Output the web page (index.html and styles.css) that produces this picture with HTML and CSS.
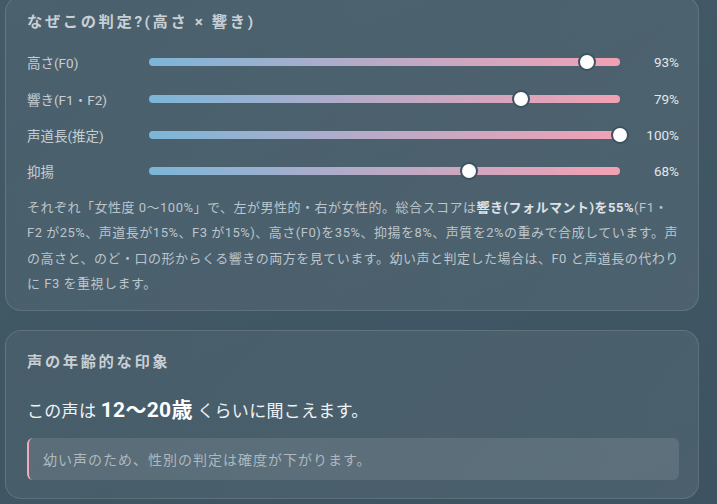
FILE: index.html
```html
<!DOCTYPE html>
<html lang="ja">
<head>
<meta charset="utf-8">
<title>判定の内訳</title>
<link rel="stylesheet" href="styles.css">
</head>
<body>
<main class="page">
  <section class="card why">
    <h2 class="card-title">なぜこの判定?(高さ × 響き)</h2>
    <div class="meters">
      <div class="meter">
        <span class="meter-label">高さ(F0)</span>
        <div class="track"><span class="thumb" style="left:93%"></span></div>
        <span class="meter-value">93%</span>
      </div>
      <div class="meter">
        <span class="meter-label">響き(F1・F2)</span>
        <div class="track"><span class="thumb" style="left:79%"></span></div>
        <span class="meter-value">79%</span>
      </div>
      <div class="meter">
        <span class="meter-label">声道長(推定)</span>
        <div class="track"><span class="thumb" style="left:100%"></span></div>
        <span class="meter-value">100%</span>
      </div>
      <div class="meter">
        <span class="meter-label">抑揚</span>
        <div class="track"><span class="thumb" style="left:68%"></span></div>
        <span class="meter-value">68%</span>
      </div>
    </div>
    <p class="explain">それぞれ「女性度 0〜100%」で、左が男性的・右が女性的。総合スコアは<strong>響き(フォルマント)を55%</strong>(F1・F2 が25%、声道長が15%、F3 が15%)、高さ(F0)を35%、抑揚を8%、声質を2%の重みで合成しています。声の高さと、のど・口の形からくる響きの両方を見ています。幼い声と判定した場合は、F0 と声道長の代わりに F3 を重視します。</p>
  </section>

  <section class="card age">
    <h2 class="card-title">声の年齢的な印象</h2>
    <p class="age-line">この声は <strong class="age-range">12〜20歳</strong> くらいに聞こえます。</p>
    <div class="note">幼い声のため、性別の判定は確度が下がります。</div>
  </section>
</main>
</body>
</html>
```

FILE: styles.css
```css
html, body {
  margin: 0;
  height: 100%;
  overflow: hidden;
}

body {
  background: linear-gradient(160deg, #435a67 0%, #3d5361 100%);
  font-family: "Roboto", "Noto Sans CJK JP", sans-serif;
  color: #c9d1d6;
}

.page {
  display: flex;
  flex-direction: column;
  gap: 19px;
  padding: 0 18px 0 5px;
}

.card {
  background: linear-gradient(135deg, rgba(255,255,255,0.045), rgba(255,255,255,0.075));
  border: 1px solid rgba(255,255,255,0.12);
  border-radius: 16px;
  padding: 15px 19px 13px 21px;
}

.why {
  margin-top: -4px;
}

.card-title {
  margin: 0;
  font-size: 15.3px;
  line-height: 20px;
  font-weight: 700;
  letter-spacing: 2.6px;
  color: #c8d0d6;
}

.meters {
  display: flex;
  flex-direction: column;
  margin-top: 12px;
}

.meter {
  display: grid;
  grid-template-columns: 122px 1fr 59px;
  align-items: center;
  height: 36.4px;
}

.meter-label {
  font-size: 13.5px;
  color: #c6ced4;
}

.track {
  position: relative;
  height: 8px;
  border-radius: 4px;
  background: linear-gradient(90deg, #7cb6d8 0%, #b5abc8 45%, #f2a1b4 100%);
}

.thumb {
  position: absolute;
  top: 50%;
  width: 14px;
  height: 14px;
  border-radius: 50%;
  background: #ffffff;
  border: 2px solid #3d5260;
  transform: translate(-50%, -50%);
}

.meter-value {
  text-align: right;
  font-size: 13.5px;
  color: #e2e8ec;
}

.explain {
  margin: 5px 0 0;
  font-size: 13px;
  line-height: 25.5px;
  letter-spacing: 0.5px;
  color: #bcc5cb;
}

.explain strong {
  font-weight: 700;
  color: #dde3e7;
}

.age {
  padding: 21px 19px 18px 21px;
}

.age-line {
  margin: 24px 0 0;
  font-size: 17px;
  line-height: 28px;
  letter-spacing: 0.3px;
  color: #eef2f4;
}

.age-range {
  font-size: 21px;
  font-weight: 700;
  color: #ffffff;
}

.note {
  margin-top: 13px;
  padding: 0 14px;
  height: 42px;
  display: flex;
  align-items: center;
  background: rgba(255,255,255,0.1);
  border-left: 2px solid #f2a9bb;
  border-radius: 6px;
  font-size: 14px;
  letter-spacing: 1px;
  color: #aeb8bf;
}
```
